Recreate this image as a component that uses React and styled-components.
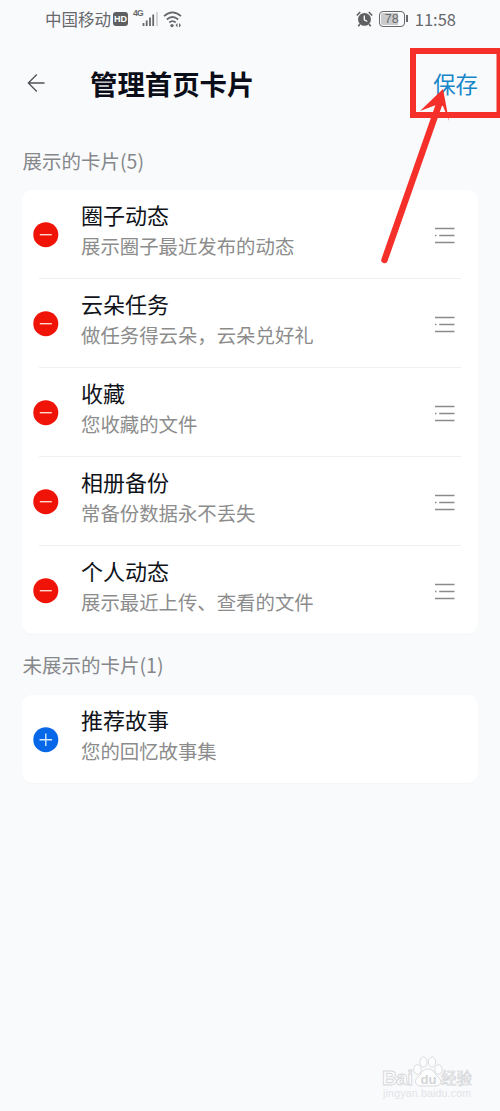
import React from 'react';
import styled, { createGlobalStyle } from 'styled-components';

const GlobalStyle = createGlobalStyle`
  * { box-sizing: border-box; }
  body {
    margin: 0;
    background: #f9fafc;
    font-family: "Noto Sans CJK SC", "Noto Sans", sans-serif;
  }
`;

const Page = styled.div`
  position: relative;
  width: 500px;
  height: 1111px;
  overflow: hidden;
  background: #f9fafc;
`;

const StatusBar = styled.header`
  display: flex;
  align-items: center;
  justify-content: space-between;
  height: 38px;
  padding: 0 44px 0 45px;
  color: #66686b;
  font-size: 16.5px;
  line-height: 36px;
  white-space: nowrap;
`;

const StatusGroup = styled.div`
  display: flex;
  align-items: center;
`;

const StatusIcon = styled.svg`
  display: block;
  flex: none;
  margin-left: ${({ $gap = 0 }) => $gap}px;
`;

const Badge = styled.span`
  width: 15px;
  height: 14px;
  margin-left: 2px;
  border-radius: 3px;
  background: #5d5f61;
  color: #fff;
  font: bold 9px/14px "Liberation Sans", sans-serif;
  text-align: center;
`;

const Network = styled.span`
  align-self: flex-start;
  width: 10px;
  margin: 8px -1px 0 5px;
  font: bold 8.5px/9px "Liberation Sans", sans-serif;
  letter-spacing: -0.8px;
`;

const Battery = styled.span`
  position: relative;
  width: 26px;
  height: 16px;
  margin: 0 10px 0 6px;
  border: 1.5px solid #66686b;
  border-radius: 4px;
  background: linear-gradient(90deg, #c9cacc 76%, transparent 76%);
  background-clip: content-box;
  padding: 1px;
  font: 12.5px/12px "Liberation Sans", sans-serif;
  text-align: center;

  &::after {
    content: '';
    position: absolute;
    top: 3px;
    right: -4px;
    width: 2px;
    height: 7px;
    background: #66686b;
  }
`;

const TitleBar = styled.div`
  display: flex;
  align-items: center;
  height: 90px;
  padding: 0 22px 0 27px;
`;

const BackIcon = styled.svg`
  display: block;
  margin-right: 44px;
`;

const Heading = styled.h1`
  flex: 1;
  margin: 0;
  color: #0b0e18;
  font-size: 27.4px;
  font-weight: 700;
  line-height: 40px;
`;

const SaveButton = styled.button`
  padding: 0;
  border: 0;
  background: none;
  color: #1686c9;
  font: 22.4px/34px "Noto Sans CJK SC", sans-serif;
`;

const SectionLabel = styled.h2`
  height: ${({ $height }) => $height}px;
  margin: 0;
  padding: ${({ $top }) => $top}px 0 0 22.5px;
  color: #85878a;
  font-size: 19.5px;
  font-weight: 400;
  line-height: 28px;
`;

const Card = styled.ul`
  margin: 0 22px;
  padding: 0 17px 0 11px;
  list-style: none;
  border-radius: 10px;
  background: #fff;
  box-shadow: 0 1px 1px rgba(30, 40, 60, 0.025);
`;

const Row = styled.li`
  display: flex;
  height: 89px;
  position: relative;
  align-items: flex-start;

  &:not(:last-child)::after {
    content: '';
    position: absolute;
    bottom: 0;
    left: 6px;
    right: 0;
    height: 1px;
    background: #eeeff0;
  }

  &:last-child { height: 88px; }
`;

const ToggleIcon = styled.svg`
  display: block;
  flex: none;
  margin: 31px 22px 0 0;
`;

const Texts = styled.div`
  flex: 1;
  padding-top: 8px;
`;

const RowTitle = styled.div`
  color: #10131a;
  font-size: 22px;
  line-height: 32px;
`;

const RowNote = styled.div`
  color: #8c8c8c;
  font-size: 19.4px;
  line-height: 32px;
`;

const HandleIcon = styled.svg`
  display: block;
  flex: none;
  margin: 37px 6px 0 0;
`;

const Annotation = styled.svg`
  position: absolute;
  top: 40px;
  left: 370px;
`;

const Watermark = styled.svg`
  position: absolute;
  left: 378px;
  top: 1050px;
`;

const shown = [
  ['圈子动态', '展示圈子最近发布的动态'],
  ['云朵任务', '做任务得云朵，云朵兑好礼'],
  ['收藏', '您收藏的文件'],
  ['相册备份', '常备份数据永不丢失'],
  ['个人动态', '展示最近上传、查看的文件'],
];

const hidden = [['推荐故事', '您的回忆故事集']];

function Toggle({ add }) {
  return (
    <ToggleIcon width="26" height="27" viewBox="0 0 26 27">
      <circle cx="12.800" cy="13.700" r="12.500" fill={add ? '#0668e8' : '#f01408'} />
      <path
        d={add ? 'M6.5 13.7h12.6M12.8 7.400v12.600' : 'M6.800 13.700h12'}
        stroke={add ? '#d8ecff' : '#ffd9cf'}
        strokeWidth="1.4"
      />
    </ToggleIcon>
  );
}

function Handle() {
  return (
    <HandleIcon width="20" height="18" viewBox="0 0 20 18">
      <path d="M0 1.500h19.500M0 8.500h1.500M4.200 8.500h15.300M0 15.500h19.500" stroke="#8b8b8b" strokeWidth="1.400" />
    </HandleIcon>
  );
}

function CardList({ items, add }) {
  return (
    <Card>
      {items.map(([title, note]) => (
        <Row key={title}>
          <Toggle add={add} />
          <Texts>
            <RowTitle>{title}</RowTitle>
            <RowNote>{note}</RowNote>
          </Texts>
          {!add && <Handle />}
        </Row>
      ))}
    </Card>
  );
}

export default function App() {
  return (
    <Page>
      <GlobalStyle />
      <StatusBar>
        <StatusGroup>
          <span>中国移动</span>
          <Badge>HD</Badge>
          <Network>4G</Network>
          <StatusIcon width="17" height="16" viewBox="0 0 17 16">
            <path d="M1.500 12v3M4.700 9.500V15M8 6.500V15M11.200 3.500V15" stroke="#66686b" strokeWidth="1.800" />
            <path d="M15 1v14" stroke="#d0d1d3" strokeWidth="1.800" />
          </StatusIcon>
          <StatusIcon $gap={4} width="20" height="17" viewBox="0 0 20 17">
            <g fill="none" stroke="#66686b" strokeWidth="1.700">
              <path d="M1 5.200Q9.500-2.500 18 5.200" />
              <path d="M3.800 8.500Q9.500 3.500 15.200 8.500" />
              <path d="M6.300 11.500Q9.500 8.600 12.700 11.500" />
            </g>
            <circle cx="9" cy="14.600" r="1.700" fill="#66686b" />
            <path d="M14.500 12l-2 2.200 2 2.200zM16 12l2 2.200-2 2.200z" fill="#66686b" />
          </StatusIcon>
        </StatusGroup>
        <StatusGroup>
          <StatusIcon width="17" height="16" viewBox="0 0 17 16">
            <circle cx="8.500" cy="8.400" r="6.400" fill="#5d5f61" />
            <path d="M8.300 4.500v4.300l3 1.700" fill="none" stroke="#fff" strokeWidth="1.300" />
            <path d="M.8 4.500L4.200 1M12.800 1l3.400 3.500M4 13l-1.700 2.300M13 13l1.700 2.300" stroke="#5d5f61" strokeWidth="1.600" />
          </StatusIcon>
          <Battery>78</Battery>
          <span>11:58</span>
        </StatusGroup>
      </StatusBar>
      <TitleBar>
        <BackIcon width="19" height="20" viewBox="0 0 19 20">
          <path d="M17.500 10H1.500M9.800 1.500L1.300 10 9.800 18.500" fill="none" stroke="#505357" strokeWidth="1.300" />
        </BackIcon>
        <Heading>管理首页卡片</Heading>
        <SaveButton>保存</SaveButton>
      </TitleBar>
      <SectionLabel $height={62} $top={19}>展示的卡片(5)</SectionLabel>
      <CardList items={shown} />
      <SectionLabel $height={61} $top={17}>未展示的卡片(1)</SectionLabel>
      <CardList items={hidden} add />
      <Annotation width="130" height="230" viewBox="0 0 130 230">
        <rect x="43" y="11" width="86.500" height="64" fill="none" stroke="#f5302b" strokeWidth="6" />
        <path d="M14.500 220L68.500 66" stroke="#f5302b" strokeWidth="6.500" strokeLinecap="round" />
        <path d="M73 49L50 71 66 65 73 66 79 81z" fill="#f5302b" />
      </Annotation>
      <Watermark width="104" height="54" viewBox="0 0 104 54">
        <g fill="#fdfdfe" stroke="#d6d8da" strokeWidth="0.900">
          <text x="4" y="35" fontFamily="Liberation Sans, sans-serif" fontWeight="bold" fontSize="21" textLength="31">Bai</text>
          <ellipse cx="39.500" cy="19.500" rx="3.800" ry="4.800" />
          <ellipse cx="45.500" cy="12" rx="3.600" ry="5" />
          <ellipse cx="54" cy="12" rx="3.600" ry="5" />
          <ellipse cx="60.500" cy="19.500" rx="3.800" ry="4.800" />
          <path d="M50 19c-6 0-7 6-10 8-5 4-2 9 3 9h14c6 0 8-5 3-9-3-2-4-8-10-8z" />
        </g>
        <text x="42.500" y="34" fill="#d3d5d7" fontFamily="Liberation Sans, sans-serif" fontWeight="bold" fontSize="13">du</text>
        <text x="63" y="34" fill="#fdfdfe" stroke="#d3d5d7" strokeWidth="0.700" fontFamily="Noto Sans CJK SC, sans-serif" fontSize="15.500">经验</text>
        <text x="5" y="47" fill="#e2e4e6" fontFamily="Liberation Sans, sans-serif" fontSize="10.500" textLength="88">jingyan.baidu.com</text>
      </Watermark>
    </Page>
  );
}
